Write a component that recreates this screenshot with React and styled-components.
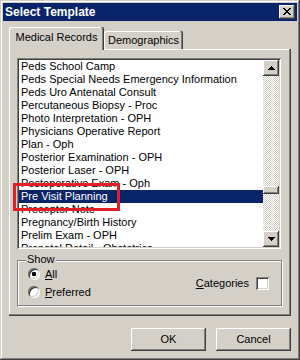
import React from "react";
import styled, { createGlobalStyle } from "styled-components";

const raised = `box-shadow: inset -1px -1px #404040, inset 1px 1px #ffffff, inset -2px -2px #808080, inset 2px 2px #d4d0c8;`;
const sunken = `box-shadow: inset 1px 1px #808080, inset -1px -1px #ffffff, inset 2px 2px #404040, inset -2px -2px #d4d0c8;`;

const Global = createGlobalStyle`
  html, body { margin: 0; padding: 0; background: #ffffff; }
  body { font-family: "Liberation Sans", Arial, sans-serif; font-size: 11px; color: #000; }
  * { box-sizing: border-box; }
`;

const Window = styled.div`
  width: 300px;
  height: 360px;
  padding: 3px;
  background: #d4d0c8;
  box-shadow: inset -1px -1px #404040, inset 1px 1px #d4d0c8, inset -2px -2px #808080, inset 2px 2px #ffffff;
  display: flex;
  flex-direction: column;
`;

const TitleBar = styled.div`
  flex: none;
  height: 18px;
  background: #0a246a;
  display: flex;
  align-items: center;
  justify-content: space-between;
  padding: 0 2px;
`;

const Title = styled.span`
  color: #ffffff;
  font-weight: bold;
  font-size: 12px;
  line-height: 14px;
`;

const CloseButton = styled.div`
  width: 16px;
  height: 14px;
  background: #d4d0c8;
  ${raised}
  display: flex;
  align-items: flex-start;
  padding: 3px 0 0 4px;
`;

const Body = styled.div`
  flex: 1;
  display: flex;
  flex-direction: column;
  padding: 6px 6px 0;
`;

const TabStrip = styled.div`
  flex: none;
  height: 22px;
  display: flex;
  align-items: flex-end;
  position: relative;
  z-index: 1;
`;

const Tab = styled.div`
  width: ${(p) => p.$w}px;
  height: ${(p) => (p.$active ? 23 : 18)}px;
  margin-bottom: ${(p) => (p.$active ? -1 : 0)}px;
  padding-top: ${(p) => (p.$active ? 4 : 3)}px;
  text-align: center;
  line-height: 13px;
  white-space: nowrap;
  background: #d4d0c8;
  border-radius: 2px 2px 0 0;
  box-shadow: inset -1px 0 #404040, inset -2px 0 #808080, inset 1px 1px #ffffff;
`;

const Panel = styled.div`
  position: relative;
  flex: none;
  height: 267px;
  background: #d4d0c8;
  box-shadow: inset -1px -1px #404040, inset -2px -2px #808080, inset 1px 1px #ffffff;
  padding: 9px 0 0 8px;
`;

const ListBox = styled.div`
  width: 264px;
  height: 191px;
  padding: 2px;
  background: #ffffff;
  ${sunken}
  display: flex;
`;

const Rows = styled.div`
  flex: 1;
  overflow: hidden;
`;

const Row = styled.div`
  height: 13px;
  line-height: 13px;
  padding-left: 2px;
  white-space: nowrap;
  overflow: hidden;
  background: ${(p) => (p.$selected ? "#0a246a" : "transparent")};
  color: ${(p) => (p.$selected ? "#ffffff" : "#000000")};
`;

const ScrollBar = styled.div`
  flex: none;
  width: 16px;
  display: flex;
  flex-direction: column;
`;

const ScrollButton = styled.div`
  flex: none;
  height: 16px;
  background: #d4d0c8;
  ${raised}
  display: flex;
  align-items: center;
  justify-content: center;
`;

const Track = styled.div`
  flex: 1;
  position: relative;
  background: repeating-conic-gradient(#d4d0c8 0 25%, #ffffff 0 50%) 0 0 / 2px 2px;
`;

const Thumb = styled.div`
  position: absolute;
  left: 0;
  right: 0;
  height: 8px;
  background: #d4d0c8;
  ${raised}
`;

const GroupBox = styled.div`
  position: relative;
  width: 265px;
  height: 46px;
  margin-top: 11px;
  border: 1px solid #808080;
  box-shadow: inset 1px 1px #ffffff, 1px 1px #ffffff;
  display: flex;
  align-items: center;
  justify-content: space-between;
  padding: 0 12px 0 10px;
`;

const Legend = styled.span`
  position: absolute;
  top: -8px;
  left: 8px;
  padding: 0 1px;
  line-height: 13px;
  background: #d4d0c8;
`;

const RadioColumn = styled.div`
  display: flex;
  flex-direction: column;
`;

const RadioRow = styled.label`
  display: flex;
  align-items: center;
  height: 18px;
  gap: 5px;
  line-height: 13px;
`;

const RadioCircle = styled.span`
  width: 12px;
  height: 12px;
  border-radius: 50%;
  background: #ffffff;
  box-shadow: inset 1px 1px #808080, inset -1px -1px #ffffff, inset 2px 2px #404040, inset -2px -2px #d4d0c8;
  display: flex;
  align-items: center;
  justify-content: center;
`;

const RadioDot = styled.span`
  width: 4px;
  height: 4px;
  border-radius: 1px;
  background: #000000;
`;

const CheckRow = styled.label`
  display: flex;
  align-items: center;
  gap: 7px;
  line-height: 13px;
`;

const CheckBox = styled.span`
  width: 13px;
  height: 13px;
  background: #ffffff;
  ${sunken}
`;

const Footer = styled.div`
  flex: none;
  display: flex;
  justify-content: flex-end;
  gap: 10px;
  margin-top: 12px;
`;

const Button = styled.div`
  width: 75px;
  height: 23px;
  background: #d4d0c8;
  ${raised}
  display: flex;
  align-items: center;
  justify-content: center;
  line-height: 13px;
`;

const Highlight = styled.div`
  position: absolute;
  left: 4px;
  top: 134px;
  width: 107px;
  height: 28px;
  border: 3px solid #e41e26;
  pointer-events: none;
  z-index: 2;
`;

const CloseGlyph = () => (
  <svg width="8" height="7" viewBox="0 0 8 7" shapeRendering="crispEdges">
    <path
      fill="#000"
      d="M0 0h2v1H0zM6 0h2v1H6zM1 1h2v1H1zM5 1h2v1H5zM2 2h4v1H2zM3 3h2v1H3zM2 4h4v1H2zM1 5h2v1H1zM5 5h2v1H5zM0 6h2v1H0zM6 6h2v1H6z"
    />
  </svg>
);

const Arrow = ({ down }) => (
  <svg width="7" height="4" viewBox="0 0 7 4" shapeRendering="crispEdges">
    <path
      fill="#000"
      d={
        down
          ? "M0 0h7v1H0zM1 1h5v1H1zM2 2h3v1H2zM3 3h1v1H3z"
          : "M3 0h1v1H3zM2 1h3v1H2zM1 2h5v1H1zM0 3h7v1H0z"
      }
    />
  </svg>
);

const items = [
  "Peds School Camp",
  "Peds Special Needs Emergency Information",
  "Peds Uro Antenatal Consult",
  "Percutaneous Biopsy - Proc",
  "Photo Interpretation - OPH",
  "Physicians Operative Report",
  "Plan - Oph",
  "Posterior Examination - OPH",
  "Posterior Laser - OPH",
  "Postoperative Exam - Oph",
  "Pre Visit Planning",
  "Preceptor Note",
  "Pregnancy/Birth History",
  "Prelim Exam - OPH",
  "Prenatal Detail - Obstetrics",
];

const SELECTED = 10;
const TRACK_HEIGHT = 155;
const THUMB_HEIGHT = 8;
const SCROLL_FRACTION = 0.748;

export default function App() {
  const thumbTop = Math.round((TRACK_HEIGHT - THUMB_HEIGHT) * SCROLL_FRACTION);
  return (
    <>
      <Global />
      <Window>
        <TitleBar>
          <Title>Select Template</Title>
          <CloseButton>
            <CloseGlyph />
          </CloseButton>
        </TitleBar>
        <Body>
          <TabStrip>
            <Tab $active $w={95}>Medical Records</Tab>
            <Tab $w={79}>Demographics</Tab>
          </TabStrip>
          <Panel>
            <ListBox>
              <Rows>
                {items.map((it, i) => (
                  <Row key={it} $selected={i === SELECTED}>
                    {it}
                  </Row>
                ))}
              </Rows>
              <ScrollBar>
                <ScrollButton>
                  <Arrow />
                </ScrollButton>
                <Track>
                  <Thumb style={{ top: thumbTop }} />
                </Track>
                <ScrollButton>
                  <Arrow down />
                </ScrollButton>
              </ScrollBar>
            </ListBox>
            <GroupBox>
              <Legend>Show</Legend>
              <RadioColumn>
                <RadioRow>
                  <RadioCircle>
                    <RadioDot />
                  </RadioCircle>
                  <span>
                    <u>A</u>ll
                  </span>
                </RadioRow>
                <RadioRow>
                  <RadioCircle />
                  <span>
                    <u>P</u>referred
                  </span>
                </RadioRow>
              </RadioColumn>
              <CheckRow>
                <span>
                  <u>C</u>ategories
                </span>
                <CheckBox />
              </CheckRow>
            </GroupBox>
            <Highlight />
          </Panel>
          <Footer>
            <Button>OK</Button>
            <Button>Cancel</Button>
          </Footer>
        </Body>
      </Window>
    </>
  );
}
